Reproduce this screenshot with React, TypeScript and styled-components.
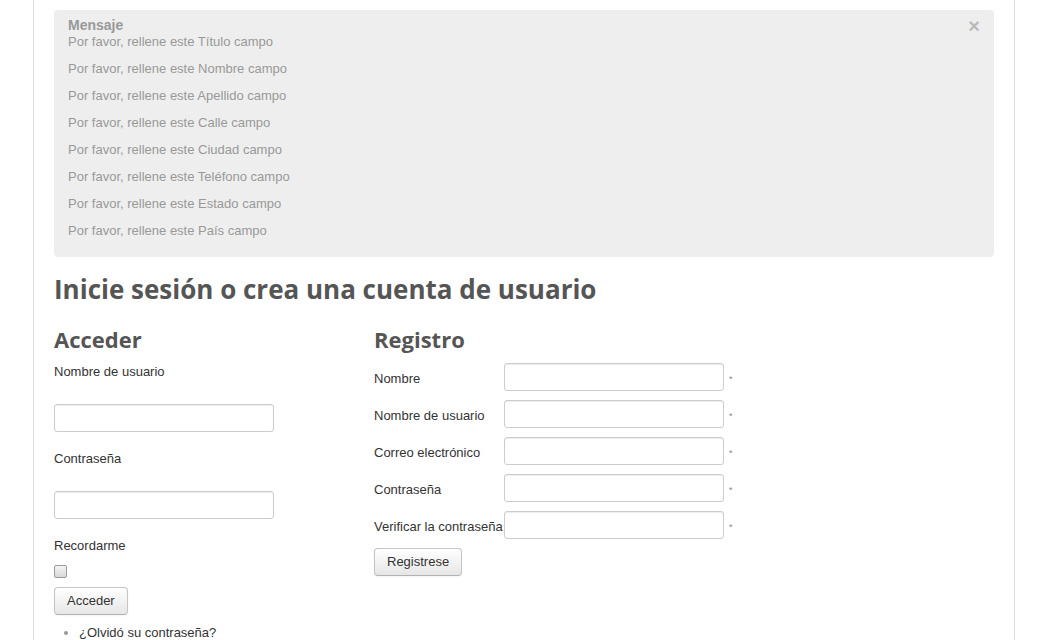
import styled, { createGlobalStyle } from "styled-components";

const GlobalStyle = createGlobalStyle`
  html, body {
    margin: 0;
    padding: 0;
    background: #fff;
  }
  body {
    font-family: "Liberation Sans", Arial, sans-serif;
    font-size: 13px;
    line-height: 18px;
    color: #333;
  }
`;

const Body = styled.div`
  margin: 0 27px 0 33px;
  min-height: 640px;
  border-left: 1px solid #ddd;
  border-right: 1px solid #ddd;
  padding: 10px 20px 0;
  background: #fff;
`;

const Alert = styled.div`
  position: relative;
  background: #eee;
  border-radius: 4px;
  padding: 8px 14px 8px;
  color: #999;
`;

const AlertHeading = styled.h4`
  margin: 0;
  font-size: 14px;
  line-height: 15px;
  font-weight: bold;
`;

const AlertMessage = styled.p`
  margin: 0 0 9px;
  line-height: 18px;
`;

const Close = styled.button`
  position: absolute;
  top: 6px;
  right: 14px;
  padding: 0;
  border: 0;
  background: none;
  font-family: "Liberation Sans", Arial, sans-serif;
  font-size: 20px;
  line-height: 20px;
  font-weight: bold;
  color: #bbb;
  cursor: pointer;
`;

const PageTitle = styled.h1`
  margin: 14px 0 0;
  font-family: "Open Sans", sans-serif;
  font-size: 26px;
  line-height: 36px;
  font-weight: 700;
  color: #555;
`;

const Columns = styled.div`
  display: grid;
  grid-template-columns: 300px 1fr;
  column-gap: 20px;
  margin-top: 19px;
`;

const Column = styled.div`
  display: flex;
  flex-direction: column;
  align-items: flex-start;
`;

const SectionTitle = styled.h2`
  margin: 0 0 11px;
  font-family: "Open Sans", sans-serif;
  font-size: 22px;
  line-height: 26px;
  font-weight: 700;
  color: #555;
`;

const StackLabel = styled.label<{ $gap?: number }>`
  display: block;
  line-height: 18px;
  margin-bottom: ${(p) => (p.$gap ?? 23)}px;
`;

const TextInput = styled.input`
  box-sizing: border-box;
  width: 220px;
  height: 28px;
  padding: 4px 6px;
  border: 1px solid #ccc;
  border-radius: 3px;
  background: #fff;
  box-shadow: inset 0 1px 1px rgba(0, 0, 0, 0.075);
  font-family: "Liberation Sans", Arial, sans-serif;
  font-size: 13px;
  outline: none;
`;

const StackInput = styled(TextInput)`
  margin-bottom: 18px;
`;

const Check = styled.input`
  appearance: none;
  box-sizing: border-box;
  width: 13px;
  height: 13px;
  margin: 10px 0 9px;
  border: 1px solid #9a9a9a;
  border-radius: 2px;
  background: linear-gradient(#f4f4f4, #d8d8d8);
`;

const Button = styled.button`
  box-sizing: border-box;
  height: 28px;
  padding: 0 12px;
  border: 1px solid #c5c5c5;
  border-bottom-color: #b3b3b3;
  border-radius: 4px;
  background: linear-gradient(#ffffff, #e6e6e6);
  box-shadow: inset 0 1px 0 rgba(255, 255, 255, 0.2), 0 1px 2px rgba(0, 0, 0, 0.05);
  font-family: "Liberation Sans", Arial, sans-serif;
  font-size: 13px;
  line-height: 18px;
  color: #333;
  cursor: pointer;
`;

const Links = styled.ul`
  margin: 9px 0 0;
  padding: 0 0 0 25px;
  line-height: 18px;
`;

const LinkItem = styled.li`
  a {
    color: #333;
    text-decoration: none;
  }
  &::marker {
    color: #999;
    font-size: 13px;
  }
`;

const Row = styled.div`
  display: flex;
  align-items: center;
  margin-bottom: 9px;
`;

const RowLabel = styled.label`
  width: 130px;
  flex-shrink: 0;
  white-space: nowrap;
  padding-top: 3px;
`;

const Star = styled.span`
  margin-left: 5px;
  font-size: 9px;
  color: #888;
  padding-top: 3px;
`;

const messages = ["Título", "Nombre", "Apellido", "Calle", "Ciudad", "Teléfono", "Estado", "País"];

const registerFields = [
  { label: "Nombre", type: "text" },
  { label: "Nombre de usuario", type: "text" },
  { label: "Correo electrónico", type: "email" },
  { label: "Contraseña", type: "password" },
  { label: "Verificar la contraseña", type: "password" },
];

export default function App() {
  return (
    <>
      <GlobalStyle />
      <Body>
        <Alert>
          <Close type="button">×</Close>
          <AlertHeading>Mensaje</AlertHeading>
          {messages.map((m) => (
            <AlertMessage key={m}>Por favor, rellene este {m} campo</AlertMessage>
          ))}
        </Alert>

        <PageTitle>Inicie sesión o crea una cuenta de usuario</PageTitle>

        <Columns>
          <Column>
            <SectionTitle>Acceder</SectionTitle>
            <StackLabel>Nombre de usuario</StackLabel>
            <StackInput type="text" />
            <StackLabel>Contraseña</StackLabel>
            <StackInput type="password" />
            <StackLabel $gap={0}>Recordarme</StackLabel>
            <Check type="checkbox" />
            <Button type="button">Acceder</Button>
            <Links>
              <LinkItem>
                <a href="#">¿Olvidó su contraseña?</a>
              </LinkItem>
            </Links>
          </Column>

          <Column>
            <SectionTitle>Registro</SectionTitle>
            {registerFields.map((f) => (
              <Row key={f.label}>
                <RowLabel>{f.label}</RowLabel>
                <TextInput type={f.type} />
                <Star>*</Star>
              </Row>
            ))}
            <Button type="button">Registrese</Button>
          </Column>
        </Columns>
      </Body>
    </>
  );
}
